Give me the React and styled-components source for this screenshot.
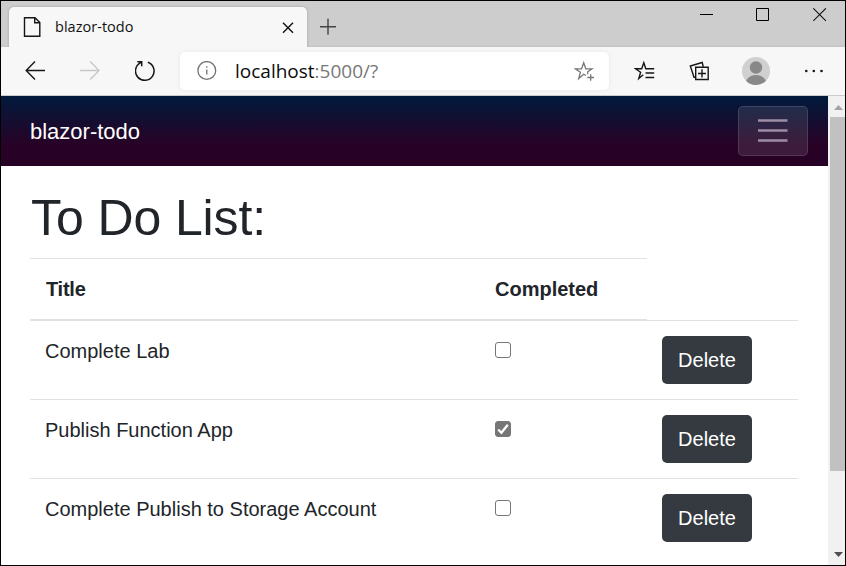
import React from "react";
import styled, { createGlobalStyle, css } from "styled-components";

const GlobalStyle = createGlobalStyle`
  * { box-sizing: border-box; }
  body { margin: 0; background: #fff; }
`;

const Window = styled.div`
  display: flex;
  flex-direction: column;
  width: 846px;
  height: 566px;
  border: 1px solid #000;
  overflow: hidden;
  background: #fff;
  color: #212529;
  font: 20px/30px "Liberation Sans", Arial, sans-serif;
`;

const TitleBar = styled.header`
  display: flex;
  flex: none;
  height: 46px;
  padding-left: 8px;
  background: #cdcdcd;
  box-shadow: inset 0 -1px 1px #c2c2c2;
`;

const Tab = styled.div`
  position: relative;
  display: flex;
  align-items: center;
  width: 298px;
  height: 40px;
  margin-top: 6px;
  padding: 0 8px 0 14px;
  border-radius: 5px 5px 0 0;
  background: #f7f7f7;
  box-shadow: 0 0 3px rgba(0, 0, 0, 0.22);
  clip-path: inset(-4px -4px 0 -4px);
`;

const TabTitle = styled.span`
  flex: 1;
  margin-left: 14px;
  color: #111;
  font: 14.5px/20px "Open Sans", "Noto Sans", sans-serif;
  letter-spacing: 0.03px;
`;

const Icon = styled.svg`
  display: block;
  flex: none;
  fill: none;
  stroke: ${(p) => p.$color || "#161616"};
  stroke-width: ${(p) => p.$weight || 1.4};
`;

const NewTab = styled.div`
  margin: 17px 0 0 12px;
`;

const WindowControls = styled.div`
  display: flex;
  gap: 43px;
  margin: 7px 18px 0 auto;

  & > :nth-child(-n + 2) {
    margin-left: -1px;
    margin-right: 1px;
  }
`;

const Toolbar = styled.div`
  display: flex;
  flex: none;
  align-items: center;
  height: 49px;
  padding: 0 20px 0 24px;
  border-bottom: 1px solid #c9cccc;
  background: #f7f7f7;
`;

const NavButtons = styled.div`
  display: flex;
  gap: 31px;
  width: 155px;
`;

const AddressBar = styled.div`
  display: flex;
  align-items: center;
  width: 429px;
  height: 38px;
  padding: 0 13px 0 16px;
  border-radius: 5px;
  background: #fff;
  box-shadow: 0 0 4px rgba(0, 0, 0, 0.07);
`;

const Url = styled.span`
  flex: 1;
  margin-left: 18px;
  color: #777;
  font: 19px/26px "Open Sans", "Noto Sans", sans-serif;
`;

const Host = styled.span`
  color: #0b0b0b;
`;

const ToolbarActions = styled.div`
  display: flex;
  align-items: center;
  gap: 33px;
  margin-left: 25px;
`;

const Avatar = styled.svg`
  display: block;
  margin-left: -2px;
`;

const Viewport = styled.div`
  display: flex;
  flex: 1;
  min-height: 0;
`;

const Page = styled.main`
  width: 827px;
  overflow: hidden;
`;

const NavBar = styled.nav`
  display: flex;
  align-items: center;
  justify-content: space-between;
  height: 70px;
  padding: 0 20px 0 29px;
  background: linear-gradient(180deg, #001a3c 0%, #280226 70%);
`;

const Brand = styled.span`
  padding-top: 2px;
  color: #fff;
  font-size: 22px;
`;

const MenuButton = styled.button`
  display: grid;
  place-items: center;
  width: 70px;
  height: 50px;
  padding: 0;
  border: 1px solid rgba(255, 255, 255, 0.13);
  border-radius: 5px;
  background: rgba(255, 255, 255, 0.1);
`;

const Content = styled.section`
  padding: 22px 30px 0 29px;
`;

const Heading = styled.h1`
  margin: 0 0 10px;
  padding-left: 1px;
  font-size: 50px;
  font-weight: 400;
  line-height: 60px;
  letter-spacing: -0.1px;
`;

const Row = styled.div`
  display: grid;
  grid-template-columns: 450px 167px 151px;
  height: 79px;
`;

const HeaderRow = styled(Row)`
  height: 62px;
`;

const Cell = styled.div`
  padding: 15px;
  border-top: 1px solid #dee2e6;
  ${(p) =>
    p.$header &&
    css`
      border-bottom: 1px solid #dee2e6;
      padding-left: ${p.$first ? 16 : 15}px;
      font-weight: 700;
      letter-spacing: ${p.$first ? "-0.25px" : 0};
    `}
`;

const Checkbox = styled.span`
  display: grid;
  place-items: center;
  width: 16px;
  height: 16px;
  margin-top: 6px;
  border: 1px solid #767676;
  border-radius: 3px;
  background: ${(p) => (p.$checked ? "#767676" : "#fff")};
`;

const DeleteButton = styled.button`
  display: block;
  width: 90px;
  height: 48px;
  padding: 0;
  border: 0;
  border-radius: 5px;
  background: #343a40;
  color: #fff;
  font: 20px/30px "Liberation Sans", Arial, sans-serif;
`;

const ScrollTrack = styled.aside`
  display: flex;
  flex-direction: column;
  width: 17px;
  padding-left: 2px;
  background: #f1f1f1;
`;

const ScrollThumb = styled.div`
  height: 354px;
  background: #c1c1c1;
`;

const ScrollArrow = styled.svg`
  display: block;
  width: 15px;
  height: 21px;
  margin-top: ${(p) => (p.$down ? "auto" : 0)};
  fill: ${(p) => (p.$down ? "#505050" : "#a3a3a3")};
`;

const todos = [
  { title: "Complete Lab", done: false },
  { title: "Publish Function App", done: true },
  { title: "Complete Publish to Storage Account", done: false },
];

export default function App() {
  return (
    <>
      <GlobalStyle />
      <Window>
        <TitleBar>
          <Tab>
            <Icon width="18" height="20" viewBox="0 0 18 20">
              <path d="M1.5 .7H12L16.8 5.5V19.3H1.5ZM11.7 1V5.8H16.5" />
            </Icon>
            <TabTitle>blazor-todo</TabTitle>
            <Icon width="22" height="22" viewBox="0 0 22 22" $weight="1.5">
              <path d="M6 6.8 16 16.8M16 6.8 6 16.8" />
            </Icon>
          </Tab>
          <NewTab>
            <Icon width="18" height="18" viewBox="0 0 18 18" $color="#444">
              <path d="M1 8.8H17M9 .8V16.8" />
            </Icon>
          </NewTab>
          <WindowControls>
            <Icon width="13" height="14" viewBox="0 0 13 14" $weight="1" $color="#000">
              <path d="M0 6.5H13" />
            </Icon>
            <Icon width="13" height="14" viewBox="0 0 13 14" $weight="1" $color="#000">
              <path d="M.5 .5H12.5V12.5H.5Z" />
            </Icon>
            <Icon width="14" height="14" viewBox="0 0 14 14" $weight="1.1" $color="#111">
              <path d="M.3 .3 12.9 12.9M12.9 .3 .3 12.9" />
            </Icon>
          </WindowControls>
        </TitleBar>

        <Toolbar>
          <NavButtons>
            <Icon width="24" height="24" viewBox="0 0 24 24">
              <path d="M20 11.5H1.2M10 2.5 1.2 11.5 10 20.5" />
            </Icon>
            <Icon width="24" height="24" viewBox="0 0 24 24" $color="#c8c8c8">
              <path d="M0 11.5H19M10.2 2.5 19 11.5 10.2 20.5" />
            </Icon>
            <Icon width="24" height="24" viewBox="0 0 24 24" $weight="1.5">
              <path d="M12.8 3.2A9.3 9.3 0 1 1 5.2 3.9L6.7 2.9M2.3 2.7H6.7V7.3" />
            </Icon>
          </NavButtons>
          <AddressBar>
            <Icon width="21" height="21" viewBox="0 0 21 21" $color="#707070" $weight="1.3">
              <circle cx="10.8" cy="9.5" r="8.9" />
              <path d="M10.8 8.5V13.5M10.8 5.3V6.8" />
            </Icon>
            <Url>
              <Host>localhost</Host>:5000/?
            </Url>
            <Icon width="22" height="22" viewBox="0 0 22 22" $color="#777" $weight="1.3">
              <path d="M12 15.5 9.7 14.2 4.7 18.5 6.4 12.3 1.3 8.8H7.6L9.7 2.7 11.8 8.8H18L13.7 11.8V14.3" />
              <path d="M13.3 17.5H20M16.7 14.3V20.7" />
            </Icon>
          </AddressBar>
          <ToolbarActions>
            <Icon width="22" height="22" viewBox="0 0 22 22" $weight="1.4">
              <path d="M9.2 14.8 4.8 18.5 6.6 12.3 1.5 8.7H7.7L9.8 2.7 11.8 8.7H20.2M11.5 13H20.2M11.5 17.5H20.2" />
            </Icon>
            <Icon width="22" height="22" viewBox="0 0 22 22" $weight="1.4">
              <path d="M6.5 17.3H5L1.3 6 13.2 2.5 14.3 6.8" />
              <path d="M6.7 7.3H19.2V19.5H6.7ZM13 9.3V17.5M9 13.5H17" />
            </Icon>
            <Avatar width="28" height="28" viewBox="0 0 28 28">
              <defs>
                <clipPath id="avatar-mask">
                  <circle cx="14" cy="14" r="14" />
                </clipPath>
              </defs>
              <g clipPath="url(#avatar-mask)">
                <path fill="#d0d0d0" d="M0 0H28V28H0Z" />
                <circle cx="14" cy="10.5" r="6.2" fill="#888" />
                <ellipse cx="14" cy="25.5" rx="10" ry="7.5" fill="#888" />
              </g>
            </Avatar>
            <svg width="20" height="20" viewBox="0 0 20 20" fill="#161616">
              <circle cx="3.3" cy="10" r="1.3" />
              <circle cx="10.8" cy="10" r="1.3" />
              <circle cx="18.5" cy="10" r="1.3" />
            </svg>
          </ToolbarActions>
        </Toolbar>

        <Viewport>
          <Page>
            <NavBar>
              <Brand>blazor-todo</Brand>
              <MenuButton aria-label="Menu">
                <Icon width="30" height="24" viewBox="0 0 30 24" $color="#9c8ca4" $weight="2.4">
                  <path d="M0 1.5H29.5M0 11.5H29.5M0 21.5H29.5" />
                </Icon>
              </MenuButton>
            </NavBar>
            <Content>
              <Heading>To Do List:</Heading>
              <HeaderRow>
                <Cell $header $first>
                  Title
                </Cell>
                <Cell $header>Completed</Cell>
              </HeaderRow>
              {todos.map(({ title, done }) => (
                <Row key={title}>
                  <Cell>{title}</Cell>
                  <Cell>
                    <Checkbox $checked={done} role="checkbox" aria-checked={done}>
                      {done && (
                        <Icon width="14" height="14" viewBox="0 0 14 14" $color="#fff" $weight="2.3">
                          <path d="M2.2 7.5 5.4 10.7 11.8 2.8" />
                        </Icon>
                      )}
                    </Checkbox>
                  </Cell>
                  <Cell>
                    <DeleteButton>Delete</DeleteButton>
                  </Cell>
                </Row>
              ))}
            </Content>
          </Page>
          <ScrollTrack>
            <ScrollArrow viewBox="0 0 15 21">
              <path d="M4 14 8.5 9 13 14Z" />
            </ScrollArrow>
            <ScrollThumb />
            <ScrollArrow viewBox="0 0 15 21" $down>
              <path d="M4 8 8.5 13 13 8Z" />
            </ScrollArrow>
          </ScrollTrack>
        </Viewport>
      </Window>
    </>
  );
}
